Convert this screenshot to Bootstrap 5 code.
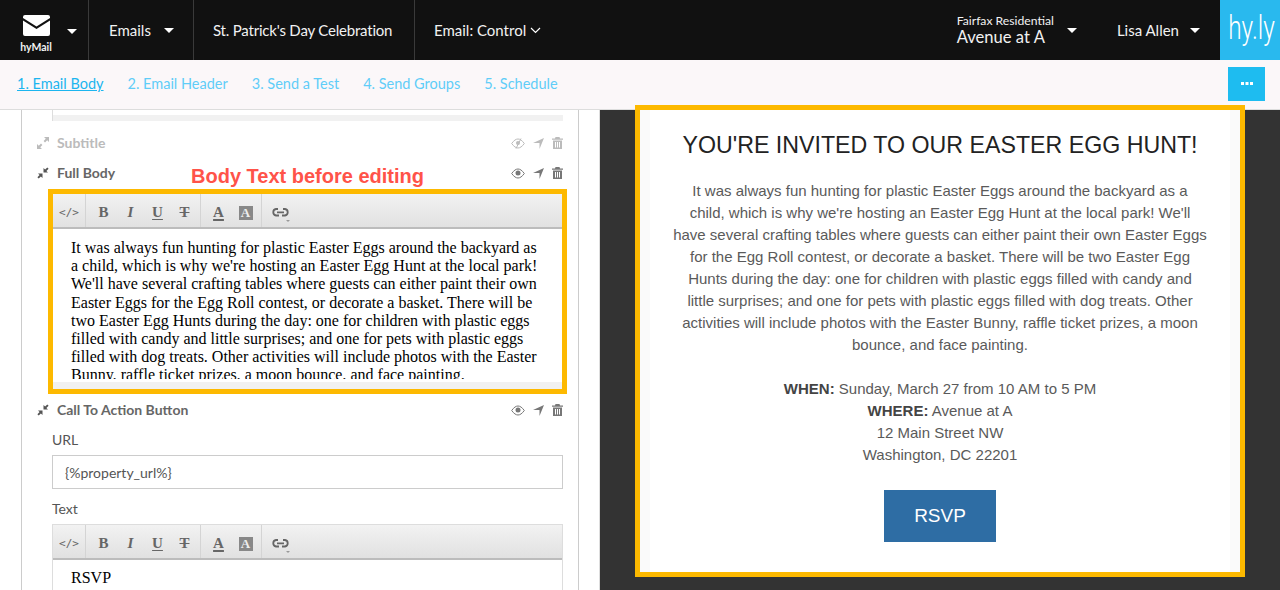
<!DOCTYPE html>
<html lang="en"><head><meta charset="utf-8"><title>hyMail</title>
<link href="https://cdn.jsdelivr.net/npm/bootstrap@5.3.0/dist/css/bootstrap.min.css" rel="stylesheet">
<style>
html,body{height:590px;overflow:hidden;margin:0}
body{font-family:"Lato","Open Sans",sans-serif;background:#fff;width:1280px}
.topbar{height:60px;background:#111;color:#f2f2f2;font-size:15px}
.tcell{height:60px;border-right:1px solid #3a3a3a}
.caret-w{width:0;height:0;border-left:5px solid transparent;border-right:5px solid transparent;border-top:5px solid #fff;display:inline-block}
.logo-cell{width:89px;padding-left:19px}
.logo-box{width:34px;text-align:center;line-height:1;padding-top:8px}
.logo-name{font-size:10.5px;font-weight:700;margin-top:6px;display:block;white-space:nowrap}
.logo-cell .caret-w{margin-left:14px;margin-top:2px}
.emails-cell{width:105px;padding-left:20px}
.emails-cell .caret-w{margin-left:auto;margin-right:19px}
.event-cell{width:221px;padding-left:19px;white-space:nowrap;letter-spacing:-.2px}
.control-cell{padding-left:19px}
.prop{line-height:1;margin-right:13px}
.prop small{display:block;font-size:12.2px}
.prop b{font-weight:400;font-size:16.6px;display:block;margin-top:2px}
.lisa{margin-left:40px}
.caret-l{margin-left:11px;margin-right:20px}
.hyly{width:60px;height:60px;background:#29b9ee;color:#fff;font-family:"Roboto",sans-serif;font-weight:300;font-size:33px;text-align:center;line-height:56px;overflow:hidden}
.hyly span{display:inline-block;transform:scaleX(.74);transform-origin:center}
.subbar{height:50px;background:#fbf7f9;border-bottom:1px solid #ddd;padding-left:17px;padding-right:15px;font-size:14.5px}
.subbar a{color:#5fcdf8;text-decoration:none;white-space:nowrap;margin-bottom:2px}
.subbar a.cur{color:#1cb5ef;text-decoration:underline}
.more{width:37px;height:34px;background:#1ebcf0;border:0;border-radius:0;padding:0;color:#fff;margin-top:-2px}
.panes{height:480px}
.leftp{width:600px;height:480px;overflow:hidden;padding-left:21px;border-right:1px solid #ddd}
.leftin{width:558px;height:480px;border-left:1px solid #ccc;border-right:1px solid #ccc;overflow:hidden}
.greytop{margin:0 0 7px 30px;padding-top:5px;width:511px;border-left:1px solid #ddd}
.greybar{height:6px;background:#f1f1f1}
.secrow{height:30px;padding-left:15px;padding-right:15px;font-size:14px;font-weight:700;color:#666}
.secrow.off{color:#bbb}
.secrow .arrows{margin-right:8px;display:block}
.secrow .ttl{margin-top:-2px}
.rowicons{margin-left:auto;gap:8px}
.frame{margin:1px 0 1px 26px;width:519px;border:5px solid #fdb900}
.tbar{height:35px;background:linear-gradient(#f2f2f2,#e1e1e1);border-bottom:2px solid #bcbcbc;color:#666}
.tgrp{height:33px;border-right:1px solid #d4d4d4;display:flex;align-items:center;padding-top:3px}
.g1{width:33px;justify-content:center;font:11px "DejaVu Sans Mono",monospace;color:#666;padding-top:3px}
.g2{width:115px;padding-left:4px}
.g3{width:61px;padding-left:4px}
.tb{width:27px;text-align:center;font:700 15px/1 "Liberation Serif",serif;color:#666;text-underline-offset:2px}
.tb.i{font-style:italic}.tb.u{text-decoration:underline}.tb.s{text-decoration:line-through}
.tb.a{text-decoration:underline;text-decoration-thickness:2px}
.aa{display:inline-block;width:14px;height:14px;background:#888;color:#eee;font:700 13px/14px "Liberation Serif",serif;text-align:center}
.lnk{padding:3px 0 0 10px;position:relative}
.lnk::after{content:"";position:absolute;left:24px;top:26px;border:2px solid transparent;border-top-color:#999;border-bottom:0}
.ebody{height:153px;overflow:hidden;padding:10px 24px 0 18px;font:16px/18.2px "Liberation Serif",serif;color:#000;background:#fff;border-bottom:3px solid #fff}
.ebar{height:7px;background:#f1f1f1}
.fld{margin-left:30px;width:511px}
.fld label{display:block;font-size:14px;color:#555;line-height:20px;margin:0}
.url-label{padding-top:5px}
.fld .url-in{height:34px;border:1px solid #ccc;border-radius:0;font-size:14px;color:#555;padding:0 12px;font-family:inherit;margin-top:5px}
.text-label{padding-top:10px;padding-bottom:5px}
.fld2{border:1px solid #ddd;border-bottom:0}
.ebody2{padding:9px 18px;font:16px/18px "Liberation Serif",serif;color:#000}
.rightp{flex:1;background:#333;height:480px;padding-left:35px}
.preview{margin-top:-5px;width:610px;height:472px;border:5px solid #fdb900;background:#fafafa;padding:0 10px;position:relative}
.pcard{background:#fff;height:462px;text-align:center;color:#5a5a5a;font:15px/22px "Liberation Sans",Arial,sans-serif;padding:18px 0 0;white-space:nowrap}
.pcard h1{font:23.2px/34px "Liberation Sans",Arial,sans-serif;color:#222;margin:0 0 18px}
.pcard p{margin:0 0 22px}
.pcard b{color:#444}
.rsvp{display:block;width:112px;height:52px;margin:24px auto 0;background:#2e6da4;color:#fff;border:0;border-radius:0;font:19px/52px "Liberation Sans",Arial,sans-serif;padding:0}
.note{position:absolute;left:191px;top:164px;color:#ff5349;font:700 20px/24px "Liberation Sans",Arial,sans-serif;white-space:nowrap;text-shadow:1px 0 #fff,-1px 0 #fff,0 1px #fff,0 -1px #fff,1px 1px #fff,-1px -1px #fff,1px -1px #fff,-1px 1px #fff}
</style></head><body>

<nav class="topbar d-flex align-items-center">
  <div class="tcell logo-cell d-flex align-items-center">
    <div class="logo-box">
      <svg width="27" height="21" viewBox="0 0 27 21" style="display:block;margin:0 auto"><path fill="#fff" d="M2 0h23a2 2 0 0 1 2 2v1L13.500 11.500 0 3V2a2 2 0 0 1 2-2zM0 5.500l13.500 8.500L27 5.500V19a2 2 0 0 1-2 2H2a2 2 0 0 1-2-2z"/></svg>
      <span class="logo-name">hyMail</span>
    </div>
    <span class="caret-w"></span>
  </div>
  <div class="tcell emails-cell d-flex align-items-center"><span>Emails</span><span class="caret-w"></span></div>
  <div class="tcell event-cell d-flex align-items-center">St. Patrick's Day Celebration</div>
  <div class="control-cell d-flex align-items-center">Email: Control
    <svg class="ms-1" width="11" height="7" viewBox="0 0 11 7"><path d="M1 1l4.500 4.500L10 1" fill="none" stroke="#fff" stroke-width="1.200"/></svg></div>
  <div class="ms-auto d-flex align-items-center">
    <div class="prop"><small>Fairfax Residential</small><b>Avenue at A</b></div>
    <span class="caret-w"></span>
    <span class="lisa">Lisa Allen</span>
    <span class="caret-w caret-l"></span>
    <div class="hyly"><span>hy.ly</span></div>
  </div>
</nav>

<div class="subbar d-flex align-items-center">
  <a class="cur" href="#">1. Email Body</a>
  <a class="ms-4" href="#">2. Email Header</a>
  <a class="ms-4" href="#">3. Send a Test</a>
  <a class="ms-4" href="#">4. Send Groups</a>
  <a class="ms-4" href="#">5. Schedule</a>
  <button class="btn more ms-auto d-flex align-items-center justify-content-center gap-0"><svg width="12" height="4" viewBox="0 0 12 4"><path fill="#fff" d="M0 0h3v3H0zM4.500 0h3v3h-3zM9 0h3v3H9z"/></svg></button>
</div>

<div class="panes d-flex">
  <div class="leftp">
    <div class="leftin">
      <div class="greytop"><div class="greybar"></div></div>

      <div class="secrow off d-flex align-items-center">
        <svg class="arrows" width="12" height="12" viewBox="0 0 12 12"><path fill="#bbb" d="M7 0h5v5l-1.800-1.800L8 5.400 6.600 4 8.800 1.800zM5 12H0V7l1.800 1.800L4 6.600 5.400 8 3.200 10.200z"/></svg>
        <span class="ttl">Subtitle</span>
        <span class="rowicons d-flex align-items-center">
          <svg width="14" height="11" viewBox="0 0 14 11"><path fill="none" stroke="#bbb" d="M.7 5.500C3 2.300 5 1 7 1s4 1.300 6.300 4.500C11 8.700 9 10 7 10S3 8.700.7 5.500zM10 .5 5 10.500"/><circle cx="7" cy="5" r="2" fill="#bbb"/></svg>
          <svg width="11" height="11" viewBox="0 0 11 11"><path fill="#bbb" d="M11 0 6.500 11V5H0z"/></svg>
          <svg width="11" height="12" viewBox="0 0 11 12"><path fill="#bbb" fill-rule="evenodd" d="M3.500 0h4L8 1.500h3v1.200H0V1.500h3zM1 3.500h9V12H1zM3 5v5.500h1V5zm2 0v5.500h1V5zm2 0v5.500h1V5z"/></svg>
        </span>
      </div>

      <div class="secrow d-flex align-items-center">
        <svg class="arrows" width="12" height="12" viewBox="0 0 12 12"><path fill="#555" d="M6.500 5.500V1l1.600 1.600L10.300.4l1.300 1.300L9.400 3.900 11 5.500zM5.500 6.500V11L3.900 9.400 1.700 11.600.4 10.300l2.200-2.200L1 6.500z"/></svg>
        <span class="ttl">Full Body</span>
        <span class="rowicons d-flex align-items-center">
          <svg width="14" height="11" viewBox="0 0 14 11"><path fill="none" stroke="#777" d="M.7 5.500C3 2.300 5 1 7 1s4 1.300 6.300 4.500C11 8.700 9 10 7 10S3 8.700.7 5.500z"/><circle cx="7" cy="5" r="2.500" fill="#777"/></svg>
          <svg width="11" height="11" viewBox="0 0 11 11"><path fill="#777" d="M11 0 6.500 11V5H0z"/></svg>
          <svg width="11" height="12" viewBox="0 0 11 12"><path fill="#777" fill-rule="evenodd" d="M3.500 0h4L8 1.500h3v1.200H0V1.500h3zM1 3.500h9V12H1zM3 5v5.500h1V5zm2 0v5.500h1V5zm2 0v5.500h1V5z"/></svg>
        </span>
      </div>

      <div class="frame">
        <div class="tbar d-flex">
          <div class="tgrp g1">&lt;/&gt;</div>
          <div class="tgrp g2"><span class="tb">B</span><span class="tb i">I</span><span class="tb u">U</span><span class="tb s">T</span></div>
          <div class="tgrp g3"><span class="tb a">A</span><span class="tb"><span class="aa">A</span></span></div>
          <div class="lnk d-flex align-items-center"><svg width="17" height="9" viewBox="0 0 17 9"><path fill="none" stroke="#666" stroke-width="1.800" d="M6 1H4a3.300 3.300 0 0 0 0 6.500h3M11 1h2a3.300 3.300 0 0 1 0 6.500h-3M5 4.300h7"/></svg></div>
        </div>
        <div class="ebody">It was always fun hunting for plastic Easter Eggs around the backyard as a child, which is why we're hosting an Easter Egg Hunt at the local park! We'll have several crafting tables where guests can either paint their own Easter Eggs for the Egg Roll contest, or decorate a basket. There will be two Easter Egg Hunts during the day: one for children with plastic eggs filled with candy and little surprises; and one for pets with plastic eggs filled with dog treats. Other activities will include photos with the Easter Bunny, raffle ticket prizes, a moon bounce, and face painting.</div>
        <div class="ebar"></div>
      </div>

      <div class="secrow d-flex align-items-center">
        <svg class="arrows" width="12" height="12" viewBox="0 0 12 12"><path fill="#555" d="M6.500 5.500V1l1.600 1.600L10.300.4l1.300 1.300L9.400 3.900 11 5.500zM5.500 6.500V11L3.900 9.400 1.700 11.600.4 10.300l2.200-2.200L1 6.500z"/></svg>
        <span class="ttl">Call To Action Button</span>
        <span class="rowicons d-flex align-items-center">
          <svg width="14" height="11" viewBox="0 0 14 11"><path fill="none" stroke="#777" d="M.7 5.500C3 2.300 5 1 7 1s4 1.300 6.300 4.500C11 8.700 9 10 7 10S3 8.700.7 5.500z"/><circle cx="7" cy="5" r="2.500" fill="#777"/></svg>
          <svg width="11" height="11" viewBox="0 0 11 11"><path fill="#777" d="M11 0 6.500 11V5H0z"/></svg>
          <svg width="11" height="12" viewBox="0 0 11 12"><path fill="#777" fill-rule="evenodd" d="M3.500 0h4L8 1.500h3v1.200H0V1.500h3zM1 3.500h9V12H1zM3 5v5.500h1V5zm2 0v5.500h1V5zm2 0v5.500h1V5z"/></svg>
        </span>
      </div>

      <div class="fld">
        <label class="url-label">URL</label>
        <input class="form-control url-in" value="{%property_url%}">
      </div>
      <div class="fld">
        <label class="text-label">Text</label>
        <div class="fld2">
          <div class="tbar d-flex">
            <div class="tgrp g1">&lt;/&gt;</div>
            <div class="tgrp g2"><span class="tb">B</span><span class="tb i">I</span><span class="tb u">U</span><span class="tb s">T</span></div>
            <div class="tgrp g3"><span class="tb a">A</span><span class="tb"><span class="aa">A</span></span></div>
            <div class="lnk d-flex align-items-center"><svg width="17" height="9" viewBox="0 0 17 9"><path fill="none" stroke="#666" stroke-width="1.800" d="M6 1H4a3.300 3.300 0 0 0 0 6.500h3M11 1h2a3.300 3.300 0 0 1 0 6.500h-3M5 4.300h7"/></svg></div>
          </div>
          <div class="ebody2">RSVP</div>
        </div>
      </div>
    </div>
  </div>

  <div class="rightp">
    <div class="preview">
      <div class="pcard">
        <h1>YOU'RE INVITED TO OUR EASTER EGG HUNT!</h1>
        <p>It was always fun hunting for plastic Easter Eggs around the backyard as a<br>child, which is why we're hosting an Easter Egg Hunt at the local park! We'll<br>have several crafting tables where guests can either paint their own Easter Eggs<br>for the Egg Roll contest, or decorate a basket. There will be two Easter Egg<br>Hunts during the day: one for children with plastic eggs filled with candy and<br>little surprises; and one for pets with plastic eggs filled with dog treats. Other<br>activities will include photos with the Easter Bunny, raffle ticket prizes, a moon<br>bounce, and face painting.</p>
        <div><b>WHEN:</b> Sunday, March 27 from 10 AM to 5 PM<br><b>WHERE:</b> Avenue at A<br>12 Main Street NW<br>Washington, DC 22201</div>
        <a class="btn rsvp" href="#">RSVP</a>
      </div>
    </div>
  </div>
</div>

<div class="note">Body Text before editing</div>
</body></html>
